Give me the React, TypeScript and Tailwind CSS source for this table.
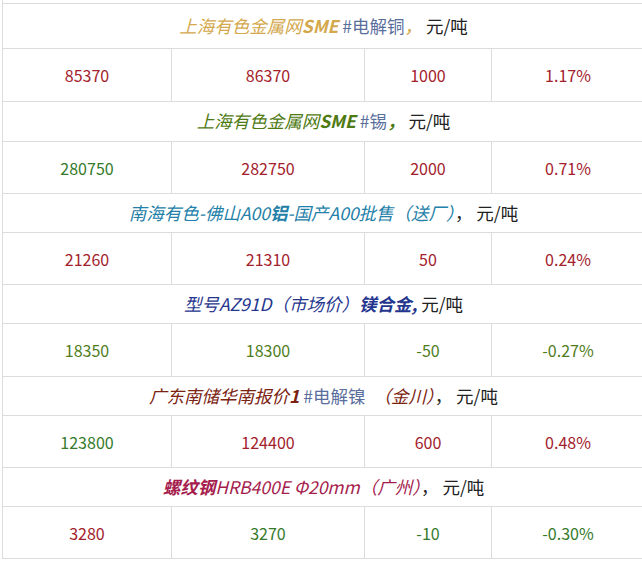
import type { ReactNode } from "react";

const RED = "text-[#a3212b]";
const GREEN = "text-[#357a2a]";
const OLIVE = "text-[#4f7d1c]";

interface Block {
  title: ReactNode;
  titleH: string;
  rowH: string;
  cells: { v: string; c: string }[];
}

const blocks: Block[] = [
  {
    titleH: "h-[45px]",
    rowH: "h-[53px]",
    title: (
      <>
        <i className="text-[#d4a84c]">上海有色金属网</i>
        <b className="italic text-[#d4a84c]">SME</b>
        <span className="text-[#5a6e9c]"> #电解铜</span>
        <i className="text-[#d4a84c]">， </i>
        <span className="text-[#222]">元/吨</span>
      </>
    ),
    cells: [
      { v: "85370", c: RED },
      { v: "86370", c: RED },
      { v: "1000", c: RED },
      { v: "1.17%", c: RED },
    ],
  },
  {
    titleH: "h-[40px]",
    rowH: "h-[52px]",
    title: (
      <>
        <i className="text-[#4e7a12]">上海有色金属网</i>
        <b className="italic text-[#4e7a12]">SME</b>
        <span className="text-[#5a6e9c]"> #锡</span>
        <b className="italic text-[#4e7a12]">， </b>
        <span className="text-[#222]">元/吨</span>
      </>
    ),
    cells: [
      { v: "280750", c: GREEN },
      { v: "282750", c: RED },
      { v: "2000", c: RED },
      { v: "0.71%", c: RED },
    ],
  },
  {
    titleH: "h-[39px]",
    rowH: "h-[52px]",
    title: (
      <>
        <i className="text-[#2380a8]">南海有色-佛山A00</i>
        <b className="italic text-[#2380a8]">铝</b>
        <i className="text-[#2380a8]">-国产A00批售（送厂）</i>
        <span className="text-[#222]">， 元/吨</span>
      </>
    ),
    cells: [
      { v: "21260", c: RED },
      { v: "21310", c: RED },
      { v: "50", c: RED },
      { v: "0.24%", c: RED },
    ],
  },
  {
    titleH: "h-[39px]",
    rowH: "h-[53px]",
    title: (
      <>
        <i className="text-[#24368e]">型号AZ91D（市场价）</i>
        <b className="italic text-[#24368e]">镁合金, </b>
        <span className="text-[#222]">元/吨</span>
      </>
    ),
    cells: [
      { v: "18350", c: OLIVE },
      { v: "18300", c: OLIVE },
      { v: "-50", c: OLIVE },
      { v: "-0.27%", c: OLIVE },
    ],
  },
  {
    titleH: "h-[39px]",
    rowH: "h-[52px]",
    title: (
      <>
        <i className="text-[#7b2310]">广东南储华南报价</i>
        <b className="italic text-[#7b2310]">1</b>
        <span className="text-[#5a6e9c]"> #电解镍 </span>
        <i className="text-[#7b2310]"> （金川）</i>
        <span className="text-[#222]">， 元/吨</span>
      </>
    ),
    cells: [
      { v: "123800", c: GREEN },
      { v: "124400", c: RED },
      { v: "600", c: RED },
      { v: "0.48%", c: RED },
    ],
  },
  {
    titleH: "h-[39px]",
    rowH: "h-[53px]",
    title: (
      <>
        <b className="italic text-[#a51d4d]">螺纹钢</b>
        <i className="text-[#a51d4d]">HRB400E Φ20mm（广州）</i>
        <span className="text-[#222]">， 元/吨</span>
      </>
    ),
    cells: [
      { v: "3280", c: RED },
      { v: "3270", c: GREEN },
      { v: "-10", c: GREEN },
      { v: "-0.30%", c: GREEN },
    ],
  },
];

export default function App() {
  return (
    <div className="w-[642px] h-[561px] overflow-hidden bg-white font-['Noto_Sans_CJK_SC','Noto_Sans',sans-serif]">
      <div className="ml-[2px] w-[642px] border-l border-[#dcdcdc] pt-[3px]">
        {blocks.map((b, i) => (
          <div key={i}>
            <div
              className={`${b.titleH} flex items-center justify-center border-t border-[#dcdcdc] text-[17.5px] whitespace-pre`}
            >
              <span>{b.title}</span>
            </div>
            <div
              className={`${b.rowH} grid grid-cols-[168px_193px_127px_1fr] border-t border-[#dcdcdc] text-[16px] ${
                i === blocks.length - 1 ? "border-b" : ""
              }`}
            >
              {b.cells.map((c, j) => (
                <div
                  key={j}
                  className={`flex items-center justify-center ${c.c} ${j > 0 ? "border-l border-[#dcdcdc]" : ""}`}
                >
                  {c.v}
                </div>
              ))}
            </div>
          </div>
        ))}
      </div>
    </div>
  );
}
